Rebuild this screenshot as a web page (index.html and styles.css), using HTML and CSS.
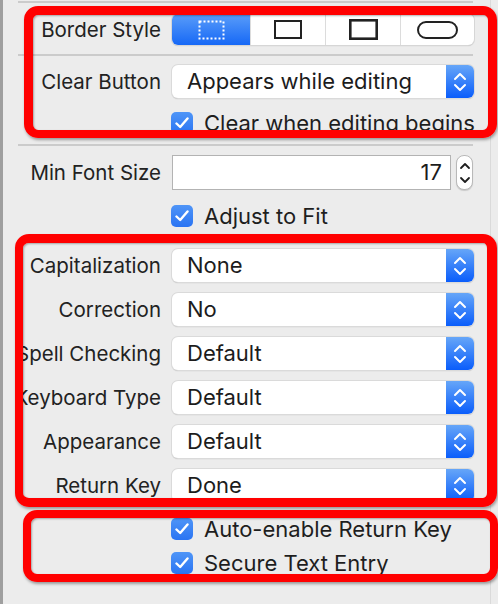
FILE: index.html
```html
<!DOCTYPE html>
<html>
<head>
<meta charset="utf-8">
<link rel="stylesheet" href="styles.css">
</head>
<body>
<div class="panel">
  <div class="sep first"></div>

  <div class="row seg-row">
    <div class="label">Border Style</div>
    <div class="segmented">
      <div class="seg selected">
        <svg width="27" height="20" viewBox="0 0 27 20"><rect x="1.5" y="1.5" width="24" height="17" fill="none" stroke="#fff" stroke-width="2" stroke-dasharray="2 2"/></svg>
      </div>
      <div class="seg">
        <svg width="28" height="19" viewBox="0 0 28 19"><rect x="1" y="1" width="26" height="17" fill="none" stroke="#222" stroke-width="2"/></svg>
      </div>
      <div class="seg">
        <svg width="29" height="21" viewBox="0 0 29 21"><rect x="1.3" y="1.3" width="26.4" height="18.4" fill="none" stroke="#222" stroke-width="2.6"/></svg>
      </div>
      <div class="seg">
        <svg width="41" height="18" viewBox="0 0 41 18"><rect x="1" y="1" width="39" height="16" rx="8" fill="none" stroke="#222" stroke-width="2"/></svg>
      </div>
    </div>
  </div>

  <div class="sep mid"></div>

  <div class="row popup-row r-clear">
    <div class="label">Clear Button</div>
    <div class="popup"><span class="ptext">Appears while editing</span><span class="pbtn"><svg width="14" height="24" viewBox="0 0 14 24"><path d="M2 9 L7 4 L12 9 M2 15 L7 20 L12 15" fill="none" stroke="#fff" stroke-width="2" stroke-linecap="round" stroke-linejoin="round"/></svg></span></div>
  </div>

  <div class="row check-row r-clearcheck">
    <div class="label"></div>
    <div class="check"><span class="box"><svg width="14" height="12" viewBox="0 0 14 12"><path d="M1.5 6.5 L5.2 10 L12.5 1.5" fill="none" stroke="#fff" stroke-width="2.4" stroke-linecap="round" stroke-linejoin="round"/></svg></span><span class="ctext">Clear when editing begins</span></div>
  </div>

  <div class="sep low"></div>

  <div class="row field-row">
    <div class="label">Min Font Size</div>
    <div class="fieldwrap">
      <div class="field">17</div>
      <div class="stepper"><svg width="12" height="30" viewBox="0 0 12 30"><path d="M2 10 L6 6 L10 10 M2 20 L6 24 L10 20" fill="none" stroke="#1e1e1e" stroke-width="1.8" stroke-linecap="round" stroke-linejoin="round"/></svg></div>
    </div>
  </div>

  <div class="row check-row r-adjust">
    <div class="label"></div>
    <div class="check"><span class="box"><svg width="14" height="12" viewBox="0 0 14 12"><path d="M1.5 6.5 L5.2 10 L12.5 1.5" fill="none" stroke="#fff" stroke-width="2.4" stroke-linecap="round" stroke-linejoin="round"/></svg></span><span class="ctext">Adjust to Fit</span></div>
  </div>

  <div class="popups">
    <div class="row popup-row">
      <div class="label">Capitalization</div>
      <div class="popup"><span class="ptext">None</span><span class="pbtn"><svg width="14" height="24" viewBox="0 0 14 24"><path d="M2 9 L7 4 L12 9 M2 15 L7 20 L12 15" fill="none" stroke="#fff" stroke-width="2" stroke-linecap="round" stroke-linejoin="round"/></svg></span></div>
    </div>
    <div class="row popup-row">
      <div class="label">Correction</div>
      <div class="popup"><span class="ptext">No</span><span class="pbtn"><svg width="14" height="24" viewBox="0 0 14 24"><path d="M2 9 L7 4 L12 9 M2 15 L7 20 L12 15" fill="none" stroke="#fff" stroke-width="2" stroke-linecap="round" stroke-linejoin="round"/></svg></span></div>
    </div>
    <div class="row popup-row">
      <div class="label">Spell Checking</div>
      <div class="popup"><span class="ptext">Default</span><span class="pbtn"><svg width="14" height="24" viewBox="0 0 14 24"><path d="M2 9 L7 4 L12 9 M2 15 L7 20 L12 15" fill="none" stroke="#fff" stroke-width="2" stroke-linecap="round" stroke-linejoin="round"/></svg></span></div>
    </div>
    <div class="row popup-row">
      <div class="label">Keyboard Type</div>
      <div class="popup"><span class="ptext">Default</span><span class="pbtn"><svg width="14" height="24" viewBox="0 0 14 24"><path d="M2 9 L7 4 L12 9 M2 15 L7 20 L12 15" fill="none" stroke="#fff" stroke-width="2" stroke-linecap="round" stroke-linejoin="round"/></svg></span></div>
    </div>
    <div class="row popup-row">
      <div class="label">Appearance</div>
      <div class="popup"><span class="ptext">Default</span><span class="pbtn"><svg width="14" height="24" viewBox="0 0 14 24"><path d="M2 9 L7 4 L12 9 M2 15 L7 20 L12 15" fill="none" stroke="#fff" stroke-width="2" stroke-linecap="round" stroke-linejoin="round"/></svg></span></div>
    </div>
    <div class="row popup-row">
      <div class="label">Return Key</div>
      <div class="popup"><span class="ptext">Done</span><span class="pbtn"><svg width="14" height="24" viewBox="0 0 14 24"><path d="M2 9 L7 4 L12 9 M2 15 L7 20 L12 15" fill="none" stroke="#fff" stroke-width="2" stroke-linecap="round" stroke-linejoin="round"/></svg></span></div>
    </div>
  </div>

  <div class="row check-row r-auto">
    <div class="label"></div>
    <div class="check"><span class="box"><svg width="14" height="12" viewBox="0 0 14 12"><path d="M1.5 6.5 L5.2 10 L12.5 1.5" fill="none" stroke="#fff" stroke-width="2.4" stroke-linecap="round" stroke-linejoin="round"/></svg></span><span class="ctext">Auto-enable Return Key</span></div>
  </div>
  <div class="row check-row r-secure">
    <div class="label"></div>
    <div class="check"><span class="box"><svg width="14" height="12" viewBox="0 0 14 12"><path d="M1.5 6.5 L5.2 10 L12.5 1.5" fill="none" stroke="#fff" stroke-width="2.4" stroke-linecap="round" stroke-linejoin="round"/></svg></span><span class="ctext">Secure Text Entry</span></div>
  </div>

  <div class="vline"></div>
  <div class="mark mark1"></div>
  <div class="mark mark2"></div>
  <div class="mark mark3"></div>
</div>
</body>
</html>
```

FILE: styles.css
```css
html, body {
  margin: 0;
  padding: 0;
  background: #ececec;
}
body {
  width: 498px;
  height: 604px;
  overflow: hidden;
  font-family: "Inter", "Liberation Sans", sans-serif;
  color: #222;
}
.panel {
  position: relative;
  height: 604px;
  border-left: 3px solid #9f9f9f;
  box-sizing: border-box;
  display: flex;
  flex-direction: column;
}
.sep {
  margin-left: 15px;
  width: 455px;
  height: 2px;
  background: #cbcbcb;
  flex: none;
}
.sep.first { margin-top: 1px; }
.sep.mid { margin-top: 9px; }
.sep.low { margin-top: 12px; }

.row {
  display: grid;
  grid-template-columns: 158px 302px;
  column-gap: 11px;
  align-items: center;
  flex: none;
}
.label {
  text-align: right;
  white-space: nowrap;
  font-size: 20.5px;
  color: #222;
  direction: rtl;
  overflow: visible;
}
.seg-row { margin-top: 11px; height: 31px; }
.segmented {
  display: grid;
  grid-template-columns: 78px 75px 75px 74px;
  height: 31px;
  background: #fff;
  border-radius: 6px;
  box-shadow: 0 0 0 1px #d6d6d6, 0 1px 1px rgba(0,0,0,0.25);
  overflow: hidden;
}
.seg {
  display: flex;
  align-items: center;
  justify-content: center;
  border-left: 1px solid #dcdcdc;
}
.seg:first-child { border-left: none; }
.seg.selected {
  background: linear-gradient(#5a9df9, #1668f6);
}
.seg svg { display: block; }

.popup-row { height: 33px; }
.r-clear { margin-top: 9px; }
.popup {
  display: flex;
  height: 33px;
  background: #fff;
  border-radius: 6px;
  box-shadow: 0 0 0 1px #dadada, 0 1px 1px rgba(0,0,0,0.3);
  overflow: hidden;
}
.ptext {
  flex: 1;
  font-size: 22px;
  line-height: 33px;
  padding-left: 15px;
  color: #1c1c1c;
  white-space: nowrap;
}
.pbtn {
  width: 28px;
  flex: none;
  display: flex;
  align-items: center;
  justify-content: center;
  background: linear-gradient(#66a6f8, #0a5dfb);
}
.pbtn svg { display: block; }

.check-row { height: 22px; }
.r-clearcheck { margin-top: 12px; }
.r-adjust { margin-top: 13px; }
.r-auto { margin-top: 14px; }
.r-secure { margin-top: 12px; }
.check {
  display: flex;
  align-items: center;
  gap: 11px;
  margin-left: -1px;
}
.box {
  width: 22px;
  height: 22px;
  border-radius: 5px;
  background: linear-gradient(#4f95f7, #2a74f3);
  display: flex;
  align-items: center;
  justify-content: center;
  flex: none;
}
.box svg { display: block; }
.ctext {
  font-size: 22px;
  color: #1e1e1e;
  white-space: nowrap;
}

.field-row { margin-top: 9px; height: 35px; }
.fieldwrap {
  display: flex;
  gap: 5px;
  height: 35px;
}
.field {
  width: 279px;
  box-sizing: border-box;
  border: 1px solid #b3b3b3;
  background: #fff;
  font-size: 22px;
  line-height: 33px;
  text-align: right;
  padding-right: 8px;
  color: #1c1c1c;
}
.stepper {
  width: 17px;
  box-sizing: border-box;
  background: #fff;
  border: 1px solid #b9b9b9;
  border-radius: 8px;
  display: flex;
  align-items: center;
  justify-content: center;
  box-shadow: 0 1px 1px rgba(0,0,0,0.15);
}
.stepper svg { display: block; }

.popups {
  margin-top: 24px;
  display: flex;
  flex-direction: column;
  gap: 11px;
}

.vline {
  position: absolute;
  left: 487px;
  top: 0;
  width: 1px;
  height: 604px;
  background: #dadada;
}
.mark {
  position: absolute;
  border: 8px solid #ff0000;
  border-radius: 14px;
  box-shadow: 1px 2px 3px rgba(0,0,0,0.35), inset 1px 1px 2px rgba(0,0,0,0.3);
  box-sizing: border-box;
}
.mark1 { left: 21px; top: 6px; width: 473px; height: 132px; border-width: 9px 9px 8px 9px; }
.mark2 { left: 12px; top: 234px; width: 482px; height: 273px; border-width: 9px 10px 9px 8px; }
.mark3 { left: 20px; top: 510px; width: 475px; height: 72px; }
```
